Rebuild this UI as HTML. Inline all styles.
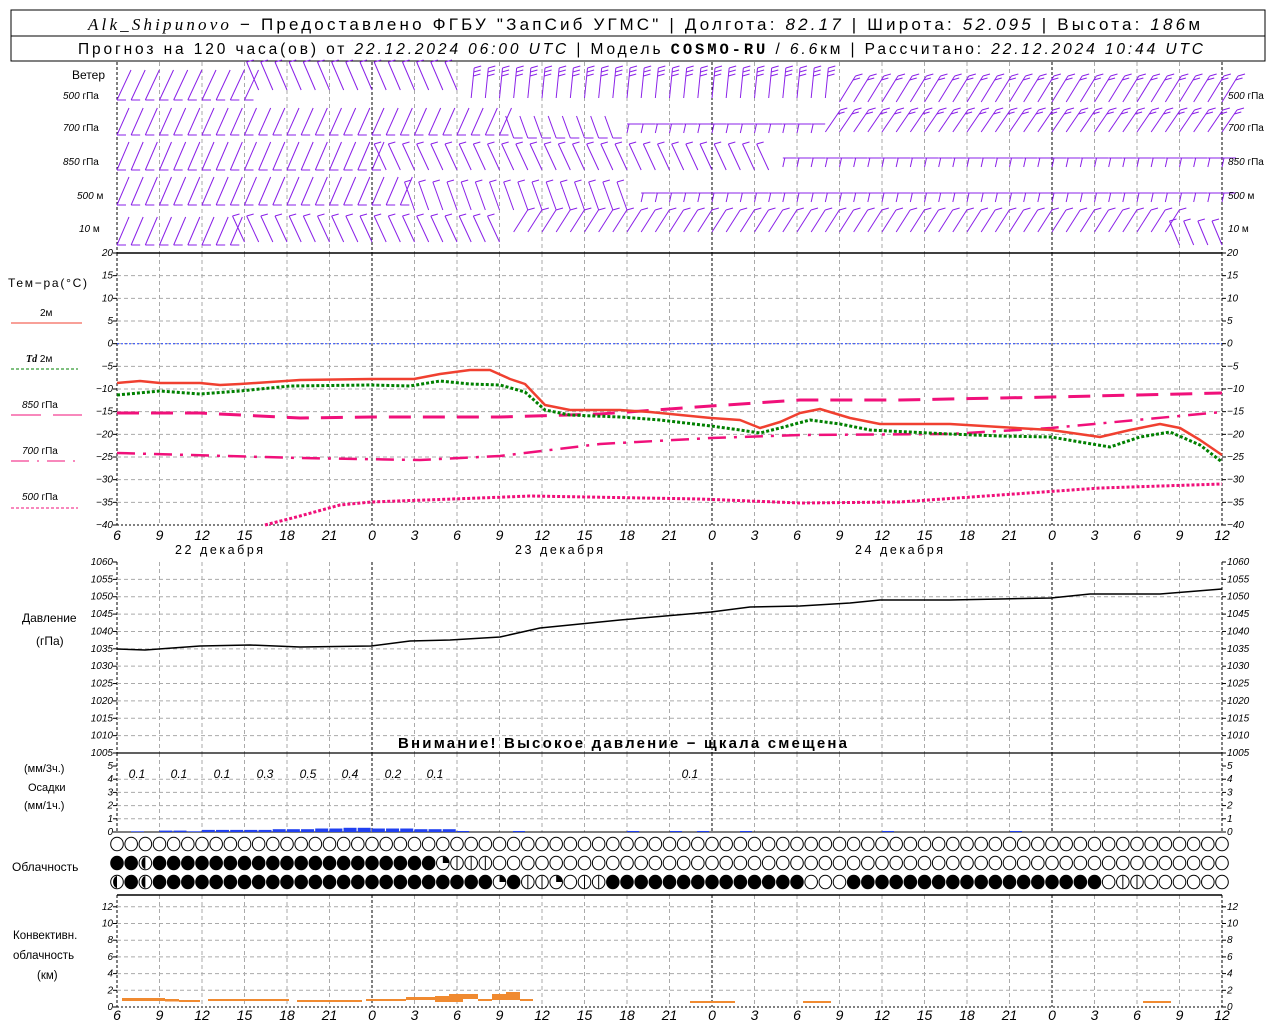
<!DOCTYPE html>
<html><head><meta charset="utf-8"><style>
html,body{margin:0;padding:0;background:#fff;width:1280px;height:1024px;overflow:hidden}
svg{display:block}
text{font-family:"Liberation Sans","DejaVu Sans",sans-serif;fill:#000}
.it{font-style:italic}
.ax{font-size:10px;font-style:italic}
.xl{font-size:14px;font-style:italic}
.lb{font-size:12px}
</style></head><body>
<svg id="s" width="1280" height="1024" xmlns="http://www.w3.org/2000/svg">
<rect x="11" y="10" width="1254" height="51" fill="none" stroke="#000"/>
<line x1="11" y1="36" x2="1265" y2="36" stroke="#000"/>
<text x="88" y="30" font-size="17" textLength="1112" lengthAdjust="spacing"><tspan font-family="Liberation Serif,serif" font-style="italic">Alk_Shipunovo</tspan> − Предоставлено ФГБУ "ЗапСиб УГМС" | Долгота: <tspan class="it">82.17</tspan> | Широта: <tspan class="it">52.095</tspan> | Высота: <tspan class="it">186</tspan>м</text>
<text x="78" y="54" font-size="15.5" textLength="1125" lengthAdjust="spacing">Прогноз на 120 часа(ов) от <tspan class="it">22.12.2024 06:00 UTC</tspan>  | Модель <tspan font-family="Liberation Mono,monospace" font-weight="bold">COSMO-RU</tspan> / <tspan class="it">6.6</tspan>км | Рассчитано: <tspan class="it">22.12.2024 10:44 UTC</tspan></text>
<g id="g"></g>
<text x="72" y="79" class="lb">Ветер</text>
<text x="63" y="99" font-size="10"><tspan class="it">500</tspan> гПа</text>
<text x="63" y="131" font-size="10"><tspan class="it">700</tspan> гПа</text>
<text x="63" y="165" font-size="10"><tspan class="it">850</tspan> гПа</text>
<text x="77" y="199" font-size="10"><tspan class="it">500</tspan> м</text>
<text x="79" y="232" font-size="10"><tspan class="it">10</tspan>  м</text>
<text x="1228" y="99" font-size="10"><tspan class="it">500</tspan> гПа</text>
<text x="1228" y="131" font-size="10"><tspan class="it">700</tspan> гПа</text>
<text x="1228" y="165" font-size="10"><tspan class="it">850</tspan> гПа</text>
<text x="1228" y="199" font-size="10"><tspan class="it">500</tspan> м</text>
<text x="1228" y="232" font-size="10"><tspan class="it">10</tspan>  м</text>
<text x="8" y="287" class="lb" textLength="79" lengthAdjust="spacing">Тем−ра(°С)</text>
<text x="40" y="316" font-size="10">2м</text>
<line x1="11" y1="323" x2="82" y2="323" stroke="#f04030"/>
<text x="26" y="362" font-size="10"><tspan class="it" font-weight="bold" font-family="Liberation Serif,serif">Td</tspan>  2м</text>
<line x1="11" y1="369" x2="78" y2="369" stroke="#008000" stroke-dasharray="3,2"/>
<text x="22" y="408" font-size="10"><tspan class="it">850</tspan> гПа</text>
<line x1="11" y1="415" x2="82" y2="415" stroke="#f0107a" stroke-dasharray="30,12"/>
<text x="22" y="454" font-size="10"><tspan class="it">700</tspan> гПа</text>
<line x1="11" y1="461" x2="78" y2="461" stroke="#f0107a" stroke-dasharray="18,8,2,8"/>
<text x="22" y="500" font-size="10"><tspan class="it">500</tspan> гПа</text>
<line x1="11" y1="508" x2="78" y2="508" stroke="#f0107a" stroke-dasharray="3,2"/>
<text x="22" y="622" class="lb">Давление</text>
<text x="36" y="645" class="lb">(гПа)</text>
<text x="398" y="748" font-size="15" font-weight="bold" textLength="449" lengthAdjust="spacing">Внимание! Высокое давление − щкала смещена</text>
<text x="24" y="772" font-size="11">(мм/3ч.)</text>
<text x="28" y="791" font-size="11">Осадки</text>
<text x="24" y="809" font-size="11">(мм/1ч.)</text>
<text x="12" y="871" class="lb">Облачность</text>
<text x="13" y="939" font-size="11.5">Конвективн.</text>
<text x="13" y="959" font-size="11.5">облачность</text>
<text x="37" y="979" font-size="11.5">(км)</text>
<text x="175" y="554" font-size="12.5" textLength="88" lengthAdjust="spacing">22 декабря</text>
<text x="515" y="554" font-size="12.5" textLength="88" lengthAdjust="spacing">23 декабря</text>
<text x="855" y="554" font-size="12.5" textLength="88" lengthAdjust="spacing">24 декабря</text>
</svg>
<script>
var NS="http://www.w3.org/2000/svg",G=document.getElementById("g");
function el(t,a,txt){var e=document.createElementNS(NS,t);for(var k in a)e.setAttribute(k,a[k]);if(txt!==undefined)e.textContent=txt;G.appendChild(e);return e;}
function ln(x1,y1,x2,y2,c,w,d){var a={x1:x1,y1:y1,x2:x2,y2:y2,stroke:c||"#000","stroke-width":w||1};if(d)a["stroke-dasharray"]=d;return el("line",a);}
var X0=117,X1=1222,H=14.1667;
function hx(h){return X0+h*H;}
var panels=[[62,253],[253,525],[562,753],[753,832],[895,1007]];
panels.forEach(function(p){
 for(var k=1;k<26;k++){var x=X0+k*42.5;var day=(k%8==6);ln(x,p[0],x,p[1],day?"#000":"#aaa",1,day?"3,2":"4,3");}
 ln(X0,p[0],X0,p[1],"#000",1,"3,2");ln(X1,p[0],X1,p[1],"#000",1,"3,2");
});
function hgrid(y0,y1,n,labs){for(var i=0;i<=n;i++){var y=y0+(y1-y0)*i/n;
 if(i>0&&i<n)ln(X0,y,X1,y,"#aaa",1,"4,3");
 ln(X0-4,y,X0,y);ln(X1,y,X1+4,y);
 el("text",{x:X0-4,y:y+3,"text-anchor":"end","class":"ax"},labs[i]);
 el("text",{x:X1+5,y:y+3,"class":"ax"},labs[i]);}}
var tl=[];for(var t=20;t>=-40;t-=5)tl.push(t==0?"0":(t<0?"−"+(-t):""+t));
hgrid(253,525,12,tl);
ln(X0,253,X1,253,"#000",1.5);ln(X0,525,X1,525,"#000",1,"2,2");
ln(X0,343.7,X1,343.7,"#2040ff",1,"2,2");
var pl=[];for(var p=1060;p>=1005;p-=5)pl.push(""+p);
hgrid(562,753,11,pl);
ln(X0,753,X1,753,"#000",1.2);
hgrid(766,832,5,["5","4","3","2","1","0"]);
ln(X0,832,X1,832,"#000",1);
var cl=["","12","10","8","6","4","2","0"];
(function(){ln(X0,895,X1,895,"#000",1.5);for(var i=1;i<=7;i++){var y=1007-(7-i)*16.7;if(i<7)ln(X0,y,X1,y,"#aaa",1,"4,3");ln(X0-4,y,X0,y);ln(X1,y,X1+4,y);el("text",{x:X0-4,y:y+3,"text-anchor":"end","class":"ax"},cl[i]);el("text",{x:X1+5,y:y+3,"class":"ax"},cl[i]);}ln(X0,1007,X1,1007,"#000",1,"2,2");})();
var hrs=[6,9,12,15,18,21,0,3,6,9,12,15,18,21,0,3,6,9,12,15,18,21,0,3,6,9,12];
hrs.forEach(function(h,k){var x=X0+k*42.5;el("text",{x:x,y:540,"text-anchor":"middle","class":"xl"},h);el("text",{x:x,y:1020,"text-anchor":"middle","class":"xl"},h);});
function pl2(pts,c,w,d){el("polyline",{points:pts.map(function(p){return p.join(",")}).join(" "),fill:"none",stroke:c,"stroke-width":w,"stroke-dasharray":d||"none","stroke-linejoin":"round"});}
pl2([[117,649],[145,650],[200,646],[250,645],[300,647],[371,646],[410,641],[450,640],[500,637],[540,628],[570,625],[620,620],[711,612],[750,607],[800,606],[850,603],[880,600],[950,600],[1000,599],[1051,598],[1090,594],[1160,594],[1222,589]],"#000",1.5);
pl2([[117,413],[200,413],[300,418],[371,417],[500,417],[600,414],[711,406],[800,400],[900,400],[1051,397],[1222,393]],"#f0107a",3,"22,12");
pl2([[117,453],[300,458],[420,460],[500,456],[600,444],[711,438],[800,435],[950,434],[1051,428],[1222,412]],"#f0107a",2.5,"18,8,3,8");
pl2([[265,525],[300,516],[340,505],[371,502],[480,498],[530,496],[700,499],[800,503],[900,502],[1000,495],[1100,488],[1222,484]],"#f0107a",3,"3,2");
pl2([[117,395],[160,391],[200,394],[240,391],[290,386],[371,385],[410,386],[440,381],[470,384],[500,385],[525,392],[545,410],[570,415],[620,417],[660,420],[711,426],[740,430],[760,433],[780,428],[810,420],[840,424],[870,430],[950,434],[1000,436],[1051,437],[1080,442],[1110,447],[1140,437],[1170,432],[1200,445],[1222,462]],"#008000",3,"3,2");
pl2([[117,383],[140,381],[160,383],[200,383],[220,385],[240,384],[300,380],[371,379],[414,379],[440,374],[470,370],[490,370],[510,379],[525,384],[545,405],[570,410],[620,410],[650,412],[711,418],[740,420],[760,428],[780,422],[800,413],[820,409],[850,418],[880,424],[950,424],[1000,427],[1051,430],[1100,437],[1130,430],[1160,424],[1180,428],[1200,440],[1222,455]],"#f04030",2.5);
var pv=[1,0,2,2,1,3,3,3,3,3,4,4,4,5,5,6,6,5,5,5,4,4,4];
for(var i=0;i<pv.length;i++){if(pv[i])el("rect",{x:131+i*14.17,y:832-pv[i]*0.7,width:13,height:pv[i]*0.7,fill:"#2040f0"});}
[457,513,627,670,697,740,882,1010].forEach(function(x){el("rect",{x:x,y:831,width:12,height:1,fill:"#2040f0"});});
[[137,"0.1"],[179,"0.1"],[222,"0.1"],[265,"0.3"],[308,"0.5"],[350,"0.4"],[393,"0.2"],[435,"0.1"],[690,"0.1"]].forEach(function(v){el("text",{x:v[0],y:778,"text-anchor":"middle","font-size":"12","class":"it"},v[1]);});
[[122,43,998,3],[165,14,999,2.5],[179,21,1000,2],[208,81,999,2],[297,65,1000,2],[366,40,999,2],[406,29,997,3],[435,14,996,6],[449,14,994,8],[463,15,994,5],[478,14,999,2],[492,14,994,6],[506,14,992,8],[520,13,999,2],[690,45,1001,2],[803,28,1001,2],[1143,28,1001,2]].forEach(function(b){el("rect",{x:b[0],y:b[2],width:b[1],height:b[3],fill:"#f08a30"});});
function cloud(x,y,t){var r=6.3;el("ellipse",{cx:x,cy:y,rx:r,ry:r+0.5,fill:t==4?"#000":"#fff",stroke:"#000"});
 if(t==2){el("path",{d:"M"+x+","+(y-r)+" A"+r+","+(r+.5)+" 0 0 0 "+x+","+(y+r)+" Z",fill:"#000"});}
 if(t==3){ln(x,y-r,x,y+r);}
 if(t==1){el("path",{d:"M"+x+","+y+" L"+x+","+(y-r)+" A"+r+","+r+" 0 0 1 "+(x+r)+","+y+" Z",fill:"#000"});}}
var r2=[],r3=[];
for(var i=0;i<79;i++){r2[i]=i<23?4:0;r3[i]=((i>=1&&i<27)||(i>=35&&i<=48)||(i>=52&&i<=69))?4:0;}
r2[2]=2;r2[23]=1;r2[24]=3;r2[25]=3;r2[26]=3;
r3[0]=2;r3[2]=2;r3[27]=1;r3[28]=4;r3[29]=3;r3[30]=3;r3[31]=1;r3[33]=3;r3[34]=3;r3[71]=3;r3[72]=3;
for(var i=0;i<79;i++){var x=hx(i);cloud(x,844,0);cloud(x,863,r2[i]);cloud(x,882,r3[i]);}
var P="#8a20e8";
function barb(x,yb,dx,len,nf,top){var tx=x+dx,ty=yb-len;ln(x,yb,tx,ty,P,1);
 for(var f=0;f<nf;f++){if(top){var fy=ty+f*4;var fx=x+dx*(1-f*4/len);ln(fx,fy,fx+7,fy-2,P,1);}else{var fy=yb-f*4;var fx=x+dx*(f*4/len);ln(fx,fy,fx+9,fy,P,1);}}}
function hbarb(x,y,nf){ln(x,y,x+14,y,P,1);for(var f=0;f<nf;f++)ln(x+2+f*3,y,x+f*3,y+9,P,1);}
for(var i=0;i<79;i++){var x=hx(i);
 if(i<10)barb(x,100,14,30,1,false);else if(i<25)barb(x,90,-12,28,1,true);else if(i<51)barb(x,98,3,30,3,true);else barb(x,102,16,26,2,true);
 if(i<28)barb(x,135,12,27,1,false);else if(i<36)barb(x,138,-8,22,1,false);else if(i<50)hbarb(x,124,1);else barb(x,132,15,22,2,true);
 if(i<19)barb(x,170,12,28,1,false);else if(i<47)barb(x,170,-12,26,1,true);else hbarb(x,158,1);
 if(i<21)barb(x,205,12,28,1,false);else if(i<37)barb(x,210,-10,28,1,true);else hbarb(x,193,1);
 if(i<9)barb(x,245,12,28,1,false);else if(i<28)barb(x,242,-12,26,1,true);else if(i<75)barb(x,232,14,22,1,true);else barb(x,245,-10,24,1,true);
}
</script>
</body></html>
